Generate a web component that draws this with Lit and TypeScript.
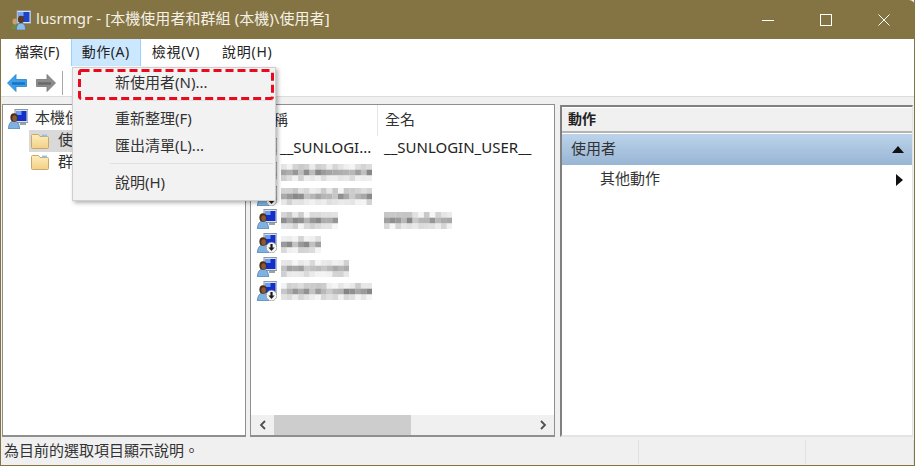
import { LitElement, html, css, svg } from "lit";
import { customElement, property } from "lit/decorators.js";

const personComputer = (badge: boolean) => svg`
  <rect x="7" y=".5" width="13" height="13" fill="#dfe3e8" stroke="#8c97a5"/>
  <rect x="8.500" y="2" width="10" height="10" fill="#1230c8"/>
  <rect x="8.500" y="2" width="5" height="4" fill="#6b9cf4"/>
  <rect x="12" y="14" width="6" height="2" fill="#9aa3ad"/>
  <path d="M.5 20c0-5 2-8 5.500-8s5.500 3 5.500 8z" fill="#7fb2e0" stroke="#3f6f9f" stroke-width=".7"/>
  <ellipse cx="6" cy="8.500" rx="3.600" ry="4.300" fill="#4a2c18"/>
  <ellipse cx="6.600" cy="9.300" rx="2.300" ry="3" fill="#8a5a36"/>
  ${badge ? svg`<circle cx="14.500" cy="14.500" r="5.300" fill="#f6f6f6" stroke="#8f8f8f" stroke-width=".7"/>
    <path d="M13.400 11h2.200v3.500h2l-3.100 3.400-3.100-3.400h2z" fill="#1c1c1c"/>` : ""}
`;

function mosaicCells(cols: number, rows: number, seed: number) {
  let s = seed;
  const rnd = () => {
    s = (s * 9301 + 49297) % 233280;
    return s / 233280;
  };
  const out: { x: number; y: number; v: number }[] = [];
  for (let y = 0; y < rows; y++) {
    for (let x = 0; x < cols; x++) {
      const base = y === 1 ? 168 : y === 0 ? 222 : 226;
      const spread = y === 1 ? 70 : y === 0 ? 50 : 40;
      const v = Math.round(Math.min(255, base + (rnd() - 0.5) * spread));
      out.push({ x, y, v });
    }
  }
  return out;
}

@customElement("blur-patch")
class BlurPatch extends LitElement {
  @property({ type: Number }) cols = 10;
  @property({ type: Number }) seed = 1;
  static styles = css`
    :host { display: block; line-height: 0; }
    svg { display: block; }
  `;
  render() {
    const cell = 5.7;
    const cells = mosaicCells(this.cols, 3, this.seed);
    return html`<svg width=${this.cols * cell} height=${3 * cell}>
      ${cells.map(c => svg`<rect x=${c.x * cell} y=${c.y * cell} width=${cell + 0.2} height=${cell + 0.2} fill="rgb(${c.v},${c.v},${c.v})"/>`)}
    </svg>`;
  }
}

const folder = html`<svg class="folder" width="18" height="16" viewBox="0 0 18 16">
  <defs><linearGradient id="fg" x1="0" y1="0" x2="0" y2="1"><stop offset="0" stop-color="#fdeebc"/><stop offset="1" stop-color="#f3cf86"/></linearGradient></defs>
  <path d="M.5 2.500a1 1 0 0 1 1-1h6l1.500 2h7.500a1 1 0 0 1 1 1v10a1 1 0 0 1-1 1h-15a1 1 0 0 1-1-1z" fill="url(#fg)" stroke="#c9a868"/>
  <rect x="11" y="1.600" width="5" height="1.800" fill="#8fc1e6"/>
</svg>`;

const rows: any[] = [
  { t: "__SUNLOGI...", full: "__SUNLOGIN_USER__", badge: true },
  { cols: 16, seed: 11, badge: true },
  { cols: 16, seed: 27, badge: true },
  { cols: 10, seed: 53, fullCols: 12, fullSeed: 71, badge: false },
  { cols: 7, seed: 91, badge: true },
  { cols: 12, seed: 37, badge: false },
  { cols: 16, seed: 143, badge: true },
];

@customElement("app-root")
class AppRoot extends LitElement {
  static styles = css`
    :host {
      display: block; width: 915px; height: 466px; overflow: hidden; position: relative;
      font-family: "Noto Sans", "Noto Sans CJK TC", sans-serif; font-size: 14px; color: #222;
    }
    .t { margin-bottom: 4px; }
    .win {
      width: 915px; height: 466px; box-sizing: border-box; background: #f0f0f0;
      border: 1px solid #857443; border-top: 0; display: flex; flex-direction: column;
    }
    .title {
      height: 39px; flex: none; margin: 0 -1px; background: #857443; color: #fff; display: flex;
      align-items: center; font-size: 15px; padding-left: 11px; border-top-right-radius: 6px;
    }
    .title .icon { flex: none; margin-right: 5px; }
    .title .txt { flex: 1; color: #f4f1e6; white-space: nowrap; letter-spacing: .06px; margin-bottom: 4px; }
    .wc { display: flex; align-items: center; gap: 46px; margin-right: 25px; }
    .wc svg { display: block; }
    .menubar { height: 27px; flex: none; background: #fff; display: flex; padding-left: 3px; }
    .mi {
      padding: 0 10px; display: flex; align-items: center; box-sizing: border-box;
      border: 1px solid transparent; border-bottom: 0; border-top: 0; white-space: nowrap; letter-spacing: .7px;
    }
    .mi:first-child { letter-spacing: .2px; }
    .mi.on { background: #cce8ff; border-color: #99d1ff; letter-spacing: .55px; }
    .toolbar {
      height: 31px; flex: none; background: #fff; border-bottom: 1px solid #dcdcdc;
      display: flex; align-items: center; padding: 4px 0 0 6px; box-sizing: border-box;
    }
    .toolbar svg { display: block; }
    .toolbar .fw { margin-left: 9px; }
    .toolbar .sep { width: 1px; height: 24px; background: #a8a8a8; margin-left: 6px; }
    .panes { flex: 1; min-height: 0; display: flex; padding: 7px 1px 0 1px; }
    .pane { background: #fff; box-sizing: border-box; min-height: 0; }
    .left { width: 244px; border: 1px solid #8f8f8f; border-bottom-width: 2px; padding-top: 2px; font-size: 15px; color: #333; }
    .tree-row { display: flex; align-items: center; height: 21.5px; white-space: nowrap; }
    .tree-row.root { padding-left: 5px; gap: 7px; height: 23px; }
    .tree-row.sub { margin-left: 26px; padding-left: 2px; gap: 9px; }
    .tree-row.sel { background: #d9d9d9; }
    .mid {
      width: 305px; margin-left: 4px; border: 1px solid #8f8f8f; border-bottom-width: 2px;
      display: flex; flex-direction: column;
    }
    .head { height: 31px; flex: none; display: flex; font-size: 15px; color: #333; align-items: center; }
    .head .c1 { width: 127px; box-sizing: border-box; padding-left: 7px; align-self: stretch; display: flex; align-items: center; border-right: 1px solid #e6e6e6; }
    .head .c2 { padding: 0 0 4px 7px; }
    .list { flex: 1; min-height: 0; }
    .row { height: 23.83px; display: flex; align-items: center; padding-left: 6px; font-size: 15px; color: #222; white-space: nowrap; }
    .row svg.pc { flex: none; }
    .row .n { width: 104px; margin-left: 3px; padding-bottom: 2px; }
    .row .f { padding-bottom: 2px; }
    .sb { height: 20px; flex: none; background: #f0f0f0; display: flex; align-items: center; }
    .sb .ar { width: 23px; flex: none; display: flex; justify-content: center; }
    .sb .thumb { width: 137px; height: 20px; background: #cdcdcd; }
    .sb .sp { flex: 1; }
    .right {
      flex: 1; margin: 1px 0 0 5px; border-left: 2px solid #808080; border-top: 2px solid #808080;
      border-right: 1px solid #e3e3e3; border-bottom: 2px solid #e3e3e3; display: flex; flex-direction: column;
    }
    .rh {
      height: 23px; flex: none; background: #f0f0f0; border-top: 1px solid #fff; border-bottom: 2px solid #b4b4b4;
      font-weight: 700; font-size: 14px; display: flex; align-items: center; padding-left: 6px; color: #222;
    }
    .rg {
      height: 31px; flex: none; margin-top: 1px; background: linear-gradient(#bcd3ea, #98b5d5);
      display: flex; align-items: center; justify-content: space-between; font-size: 15px;
      padding: 0 8px 0 9px; color: #333;
    }
    .ri { display: flex; justify-content: space-between; align-items: center; height: 29px; padding: 0 9px 0 38px; font-size: 15px; color: #333; }
    .rg svg, .ri svg { display: block; }
    .status { height: 28px; flex: none; display: flex; background: #f0f0f0; font-size: 15px; color: #333; padding-bottom: 1px; box-sizing: border-box; }
    .status .s1 { width: 637px; padding: 0 0 2px 3px; box-sizing: border-box; display: flex; align-items: center; flex: none; }
    .status .s2 { width: 166px; border-left: 1px solid #e2e2e2; flex: none; margin-top: 3px; }
    .status .s3 { width: 107px; flex: none; border-left: 1px solid #e2e2e2; border-right: 1px solid #e2e2e2; margin-top: 3px; }
    .drop {
      position: absolute; left: 72px; top: 67px; width: 204px; height: 134px; box-sizing: border-box;
      background: #f2f2f2; border: 1px solid #cfcfcf; box-shadow: 2px 2px 4px rgba(0,0,0,.3); font-size: 15px; color: #333;
    }
    .d-item { height: 27px; display: flex; align-items: center; padding-left: 42px; white-space: nowrap; }
    .d-item.s-a { height: 32px; padding-bottom: 6px; box-sizing: border-box; }
    .d-item.s-b { padding-bottom: 4px; box-sizing: border-box; }
    .d-sep { height: 1px; background: #e0e0e0; margin: 0 2px 0 37px; }
    .d-sep.low { margin-top: 3px; }
    .gap5 { margin-top: 5px; }
    .gap6 { margin-top: 6px; }
    .mark { position: absolute; left: 78px; top: 69px; display: block; }
    blur-patch { flex: none; margin: 4px 0 0 1px; }
    .f blur-patch { margin-left: 0; }
  `;

  render() {
    return html`<div class="win">
      <div class="title">
        <svg class="icon" width="20" height="20" viewBox="0 0 20 20">
          <path d="M.5 19c0-3 1.200-5 3.500-5s3.500 2 3.500 5z" fill="#6c8a4a"/>
          <ellipse cx="4" cy="11.500" rx="2.500" ry="3" fill="#caa070"/>
          <rect x="6" y=".5" width="14" height="13" fill="#dfe3e8" stroke="#8c97a5"/>
          <rect x="7.500" y="2" width="11" height="10" fill="#1c44c8"/>
          <rect x="7.500" y="2" width="5" height="4" fill="#7aa6f0"/>
          <path d="M5.500 20c0-5 1.800-7 4.500-7s4.500 2 4.500 7z" fill="#8fbce6" stroke="#3f6f9f" stroke-width=".6"/>
          <ellipse cx="10" cy="9.500" rx="3" ry="3.800" fill="#5a3a20"/>
        </svg>
        <span class="txt">lusrmgr - [本機使用者和群組 (本機)\\使用者]</span>
        <span class="wc">
          <svg width="12" height="12"><path d="M0 6.500h12" stroke="#fff"/></svg>
          <svg width="12" height="12"><rect x=".5" y=".5" width="11" height="11" fill="none" stroke="#fff"/></svg>
          <svg width="12" height="12"><path d="M.5.500l11 11M11.500.500l-11 11" stroke="#fff"/></svg>
        </span>
      </div>
      <div class="menubar">
        <div class="mi"><span class="t">檔案(F)</span></div>
        <div class="mi on"><span class="t">動作(A)</span></div>
        <div class="mi"><span class="t">檢視(V)</span></div>
        <div class="mi"><span class="t">說明(H)</span></div>
      </div>
      <div class="toolbar">
        <svg width="20" height="18" viewBox="0 0 20 18"><path d="M.5 9l8.500-8.500v5h10.500v7H9v5z" fill="#3aa0ea" stroke="#2a80c8" stroke-width=".8"/><path d="M5 9.500h13" stroke="#1f6fc0" stroke-width="2.500"/></svg>
        <svg class="fw" width="20" height="18" viewBox="0 0 20 18"><path d="M19.500 9L11 .5v5H.5v7H11v5z" fill="#8d8d8d" stroke="#777" stroke-width=".8"/><path d="M2 9.500h13" stroke="#6a6a6a" stroke-width="2.500"/></svg>
        <div class="sep"></div>
      </div>
      <div class="panes">
        <div class="pane left">
          <div class="tree-row root">
            <svg width="20" height="20" viewBox="0 0 20 20" class="pc">${personComputer(false)}</svg>
            <span class="t">本機使用者和群組</span>
          </div>
          <div class="tree-row sub sel">${folder}<span class="t">使用者</span></div>
          <div class="tree-row sub">${folder}<span class="t">群組</span></div>
        </div>
        <div class="pane mid">
          <div class="head"><div class="c1"><span class="t">名稱</span></div><div class="c2">全名</div></div>
          <div class="list">
            ${rows.map(r => html`<div class="row">
              <svg class="pc" width="20" height="20" viewBox="0 0 20 20">${personComputer(r.badge)}</svg>
              <div class="n">${r.t ? r.t : html`<blur-patch .cols=${r.cols} .seed=${r.seed}></blur-patch>`}</div>
              <div class="f">${r.full ? r.full : r.fullCols ? html`<blur-patch .cols=${r.fullCols} .seed=${r.fullSeed}></blur-patch>` : ""}</div>
            </div>`)}
          </div>
          <div class="sb">
            <div class="ar"><svg width="8" height="10"><path d="M6 1L2 5l4 4" fill="none" stroke="#505050" stroke-width="1.800"/></svg></div>
            <div class="thumb"></div>
            <div class="sp"></div>
            <div class="ar"><svg width="8" height="10"><path d="M2 1l4 4-4 4" fill="none" stroke="#505050" stroke-width="1.800"/></svg></div>
          </div>
        </div>
        <div class="pane right">
          <div class="rh"><span class="t">動作</span></div>
          <div class="rg"><span class="t">使用者</span><svg width="12" height="7"><path d="M6 0l6 7H0z" fill="#111"/></svg></div>
          <div class="ri"><span class="t">其他動作</span><svg width="7" height="12"><path d="M0 0l7 6-7 6z" fill="#111"/></svg></div>
        </div>
      </div>
      <div class="status">
        <div class="s1">為目前的選取項目顯示說明。</div>
        <div class="s2"></div>
        <div class="s3"></div>
      </div>
    </div>
    <div class="drop">
      <div class="d-item s-a">新使用者(N)...</div>
      <div class="d-sep"></div>
      <div class="d-item s-b gap5">重新整理(F)</div>
      <div class="d-item s-b">匯出清單(L)...</div>
      <div class="d-sep low"></div>
      <div class="d-item s-b gap6">說明(H)</div>
    </div>
    <svg class="mark" width="196" height="31"><rect x="1.500" y="1.500" width="193" height="28" rx="2" fill="none" stroke="#ea0a1e" stroke-width="3" stroke-dasharray="8 4"/></svg>`;
  }
}
